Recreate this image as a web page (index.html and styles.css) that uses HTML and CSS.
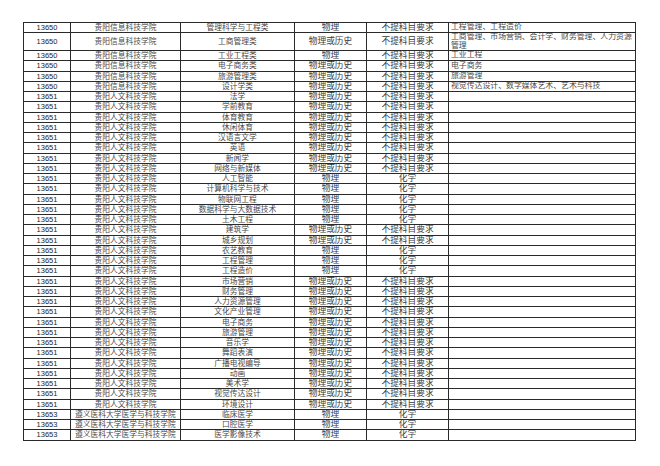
FILE: index.html
```html
<!DOCTYPE html>
<html lang="zh-CN">
<head>
<meta charset="utf-8">
<title>院校专业选科要求</title>
<link rel="stylesheet" href="styles.css">
</head>
<body>
<table class="sheet">
<colgroup>
<col class="c1"><col class="c2"><col class="c3"><col class="c4"><col class="c5"><col class="c6">
</colgroup>
<tbody>
<tr class="r-first"><td class="num">13650</td><td class="cn">贵阳信息科技学院</td><td class="cn">管理科学与工程类</td><td class="big">物理</td><td class="big">不提科目要求</td><td class="inc">工程管理、工程造价</td></tr>
<tr class="r-double"><td class="num">13650</td><td class="cn">贵阳信息科技学院</td><td class="cn">工商管理类</td><td class="big">物理或历史</td><td class="big">不提科目要求</td><td class="inc">工商管理、市场营销、会计学、财务管理、人力资源管理</td></tr>
<tr><td class="num">13650</td><td class="cn">贵阳信息科技学院</td><td class="cn">工业工程类</td><td class="big">物理</td><td class="big">不提科目要求</td><td class="inc">工业工程</td></tr>
<tr><td class="num">13650</td><td class="cn">贵阳信息科技学院</td><td class="cn">电子商务类</td><td class="big">物理或历史</td><td class="big">不提科目要求</td><td class="inc">电子商务</td></tr>
<tr><td class="num">13650</td><td class="cn">贵阳信息科技学院</td><td class="cn">旅游管理类</td><td class="big">物理或历史</td><td class="big">不提科目要求</td><td class="inc">旅游管理</td></tr>
<tr><td class="num">13650</td><td class="cn">贵阳信息科技学院</td><td class="cn">设计学类</td><td class="big">物理或历史</td><td class="big">不提科目要求</td><td class="inc">视觉传达设计、数字媒体艺术、艺术与科技</td></tr>
<tr><td class="num">13651</td><td class="cn">贵阳人文科技学院</td><td class="cn">法学</td><td class="big">物理或历史</td><td class="big">不提科目要求</td><td class="inc"></td></tr>
<tr><td class="num">13651</td><td class="cn">贵阳人文科技学院</td><td class="cn">学前教育</td><td class="big">物理或历史</td><td class="big">不提科目要求</td><td class="inc"></td></tr>
<tr><td class="num">13651</td><td class="cn">贵阳人文科技学院</td><td class="cn">体育教育</td><td class="big">物理或历史</td><td class="big">不提科目要求</td><td class="inc"></td></tr>
<tr><td class="num">13651</td><td class="cn">贵阳人文科技学院</td><td class="cn">休闲体育</td><td class="big">物理或历史</td><td class="big">不提科目要求</td><td class="inc"></td></tr>
<tr><td class="num">13651</td><td class="cn">贵阳人文科技学院</td><td class="cn">汉语言文学</td><td class="big">物理或历史</td><td class="big">不提科目要求</td><td class="inc"></td></tr>
<tr><td class="num">13651</td><td class="cn">贵阳人文科技学院</td><td class="cn">英语</td><td class="big">物理或历史</td><td class="big">不提科目要求</td><td class="inc"></td></tr>
<tr><td class="num">13651</td><td class="cn">贵阳人文科技学院</td><td class="cn">新闻学</td><td class="big">物理或历史</td><td class="big">不提科目要求</td><td class="inc"></td></tr>
<tr><td class="num">13651</td><td class="cn">贵阳人文科技学院</td><td class="cn">网络与新媒体</td><td class="big">物理或历史</td><td class="big">不提科目要求</td><td class="inc"></td></tr>
<tr><td class="num">13651</td><td class="cn">贵阳人文科技学院</td><td class="cn">人工智能</td><td class="big">物理</td><td class="big">化学</td><td class="inc"></td></tr>
<tr><td class="num">13651</td><td class="cn">贵阳人文科技学院</td><td class="cn">计算机科学与技术</td><td class="big">物理</td><td class="big">化学</td><td class="inc"></td></tr>
<tr><td class="num">13651</td><td class="cn">贵阳人文科技学院</td><td class="cn">物联网工程</td><td class="big">物理</td><td class="big">化学</td><td class="inc"></td></tr>
<tr><td class="num">13651</td><td class="cn">贵阳人文科技学院</td><td class="cn">数据科学与大数据技术</td><td class="big">物理</td><td class="big">化学</td><td class="inc"></td></tr>
<tr><td class="num">13651</td><td class="cn">贵阳人文科技学院</td><td class="cn">土木工程</td><td class="big">物理</td><td class="big">化学</td><td class="inc"></td></tr>
<tr><td class="num">13651</td><td class="cn">贵阳人文科技学院</td><td class="cn">建筑学</td><td class="big">物理或历史</td><td class="big">不提科目要求</td><td class="inc"></td></tr>
<tr><td class="num">13651</td><td class="cn">贵阳人文科技学院</td><td class="cn">城乡规划</td><td class="big">物理或历史</td><td class="big">不提科目要求</td><td class="inc"></td></tr>
<tr><td class="num">13651</td><td class="cn">贵阳人文科技学院</td><td class="cn">农艺教育</td><td class="big">物理</td><td class="big">化学</td><td class="inc"></td></tr>
<tr><td class="num">13651</td><td class="cn">贵阳人文科技学院</td><td class="cn">工程管理</td><td class="big">物理</td><td class="big">化学</td><td class="inc"></td></tr>
<tr><td class="num">13651</td><td class="cn">贵阳人文科技学院</td><td class="cn">工程造价</td><td class="big">物理</td><td class="big">化学</td><td class="inc"></td></tr>
<tr><td class="num">13651</td><td class="cn">贵阳人文科技学院</td><td class="cn">市场营销</td><td class="big">物理或历史</td><td class="big">不提科目要求</td><td class="inc"></td></tr>
<tr><td class="num">13651</td><td class="cn">贵阳人文科技学院</td><td class="cn">财务管理</td><td class="big">物理或历史</td><td class="big">不提科目要求</td><td class="inc"></td></tr>
<tr><td class="num">13651</td><td class="cn">贵阳人文科技学院</td><td class="cn">人力资源管理</td><td class="big">物理或历史</td><td class="big">不提科目要求</td><td class="inc"></td></tr>
<tr><td class="num">13651</td><td class="cn">贵阳人文科技学院</td><td class="cn">文化产业管理</td><td class="big">物理或历史</td><td class="big">不提科目要求</td><td class="inc"></td></tr>
<tr><td class="num">13651</td><td class="cn">贵阳人文科技学院</td><td class="cn">电子商务</td><td class="big">物理或历史</td><td class="big">不提科目要求</td><td class="inc"></td></tr>
<tr><td class="num">13651</td><td class="cn">贵阳人文科技学院</td><td class="cn">旅游管理</td><td class="big">物理或历史</td><td class="big">不提科目要求</td><td class="inc"></td></tr>
<tr><td class="num">13651</td><td class="cn">贵阳人文科技学院</td><td class="cn">音乐学</td><td class="big">物理或历史</td><td class="big">不提科目要求</td><td class="inc"></td></tr>
<tr><td class="num">13651</td><td class="cn">贵阳人文科技学院</td><td class="cn">舞蹈表演</td><td class="big">物理或历史</td><td class="big">不提科目要求</td><td class="inc"></td></tr>
<tr><td class="num">13651</td><td class="cn">贵阳人文科技学院</td><td class="cn">广播电视编导</td><td class="big">物理或历史</td><td class="big">不提科目要求</td><td class="inc"></td></tr>
<tr><td class="num">13651</td><td class="cn">贵阳人文科技学院</td><td class="cn">动画</td><td class="big">物理或历史</td><td class="big">不提科目要求</td><td class="inc"></td></tr>
<tr><td class="num">13651</td><td class="cn">贵阳人文科技学院</td><td class="cn">美术学</td><td class="big">物理或历史</td><td class="big">不提科目要求</td><td class="inc"></td></tr>
<tr><td class="num">13651</td><td class="cn">贵阳人文科技学院</td><td class="cn">视觉传达设计</td><td class="big">物理或历史</td><td class="big">不提科目要求</td><td class="inc"></td></tr>
<tr><td class="num">13651</td><td class="cn">贵阳人文科技学院</td><td class="cn">环境设计</td><td class="big">物理或历史</td><td class="big">不提科目要求</td><td class="inc"></td></tr>
<tr><td class="num">13653</td><td class="cn">遵义医科大学医学与科技学院</td><td class="cn">临床医学</td><td class="big">物理</td><td class="big">化学</td><td class="inc"></td></tr>
<tr><td class="num">13653</td><td class="cn">遵义医科大学医学与科技学院</td><td class="cn">口腔医学</td><td class="big">物理</td><td class="big">化学</td><td class="inc"></td></tr>
<tr><td class="num">13653</td><td class="cn">遵义医科大学医学与科技学院</td><td class="cn">医学影像技术</td><td class="big">物理</td><td class="big">化学</td><td class="inc"></td></tr>
</tbody>
</table>
</body>
</html>
```
FILE: styles.css
```css
html, body {
  margin: 0;
  padding: 0;
  background: #ffffff;
}

.sheet {
  margin: 22px 0 0 23px;
  width: 613px;
  table-layout: fixed;
  border-collapse: separate;
  border-spacing: 0;
  border-top: 1px solid #2a2a2a;
  border-left: 1px solid #2a2a2a;
}

.c1 { width: 47px; }
.c2 { width: 110px; }
.c3 { width: 114px; }
.c4 { width: 72px; }
.c5 { width: 82px; }
.c6 { width: 187px; }

.sheet tr {
  height: 10.263px;
}

.sheet tr.r-first {
  height: 10px;
}

.sheet tr.r-double {
  height: 18px;
}

.sheet td {
  padding: 0;
  border-right: 1px solid #2a2a2a;
  border-bottom: 1px solid #2a2a2a;
  text-align: center;
  vertical-align: middle;
  white-space: nowrap;
  overflow: hidden;
  line-height: 9px;
  color: #4a4a4a;
  font-family: "Liberation Serif", "Noto Sans CJK SC", serif;
}

.sheet td.num {
  font-family: "Liberation Sans", Arial, sans-serif;
  font-size: 7.5px;
  color: #1e1e1e;
}

.sheet td.cn {
  font-size: 7.75px;
}

.sheet td.big {
  font-size: 8.7px;
  color: #3a3a3a;
}

.sheet td.inc {
  text-align: left;
  padding-left: 2px;
  font-size: 7.87px;
  white-space: normal;
  line-height: 8.5px;
}
```
